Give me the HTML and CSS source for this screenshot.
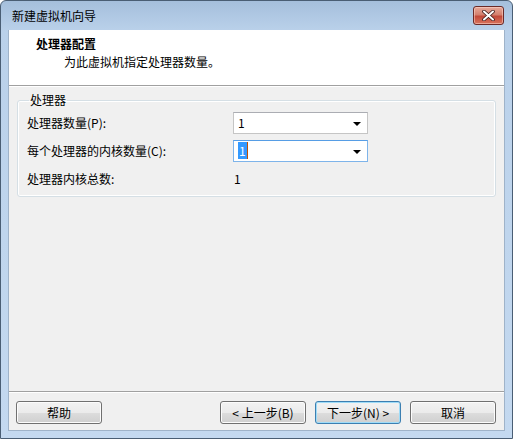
FILE: index.html
```html
<!DOCTYPE html>
<html lang="zh-CN">
<head>
<meta charset="UTF-8">
<title>新建虚拟机向导</title>
<link rel="stylesheet" href="styles.css">
</head>
<body>

<div class="window">
  <!-- Title bar -->
  <div class="titlebar">
    <span class="title">新建虚拟机向导</span>
    <button class="close-btn" title="关闭">
      <svg width="13" height="11" viewBox="0 0 13 11">
        <path d="M2 1.5 L11 9.5 M11 1.5 L2 9.5" stroke="#3b1a1a" stroke-width="3.6" stroke-linecap="round"/>
        <path d="M2 1.5 L11 9.5 M11 1.5 L2 9.5" stroke="#fff" stroke-width="2" stroke-linecap="round"/>
      </svg>
    </button>
  </div>

  <div class="client">
    <!-- Wizard header -->
    <div class="wizard-header">
      <div class="header-title">处理器配置</div>
      <div class="header-sub">为此虚拟机指定处理器数量。</div>
    </div>

    <!-- Page body -->
    <div class="wizard-body">
      <fieldset class="group">
        <legend>处理器</legend>
        <div class="form-grid">
          <label>处理器数量(P):</label>
          <div class="combo">
            <span class="combo-value">1</span>
            <span class="combo-arrow"></span>
          </div>

          <label>每个处理器的内核数量(C):</label>
          <div class="combo focused">
            <span class="combo-value"><span class="sel">1</span></span>
            <span class="combo-arrow"></span>
          </div>

          <label>处理器内核总数:</label>
          <span class="total">1</span>
        </div>
      </fieldset>
    </div>

    <!-- Buttons -->
    <div class="wizard-footer">
      <button class="btn">帮助</button>
      <div class="nav-buttons">
        <button class="btn">&lt; 上一步(B)</button>
        <button class="btn default">下一步(N) &gt;</button>
        <button class="btn">取消</button>
      </div>
    </div>
  </div>
</div>

</body>
</html>
```

FILE: styles.css
```css
body {
  margin: 0;
  padding: 0;
  background: #fff;
  font-family: "Noto Sans CJK SC", "Noto Sans", sans-serif;
  font-size: 12px;
  color: #000;
}

/* Window frame */
.window {
  width: 513px;
  height: 439px;
  box-sizing: border-box;
  border: 1px solid #4a5e74;
  border-radius: 6px 6px 0 0;
  background: linear-gradient(to bottom, #a5bfdc 0px, #bad1ea 30px, #c4d9f0 100%);
  padding: 0 7px 7px 7px;
  display: flex;
  flex-direction: column;
}

.titlebar {
  height: 29px;
  display: flex;
  align-items: center;
  justify-content: space-between;
  padding-left: 4px;
}

.title {
  color: #000;
  line-height: 14px;
  margin-top: 1px;
}

.close-btn {
  width: 31px;
  height: 19px;
  margin-right: 1px;
  padding: 0;
  border: 1px solid #6b2a27;
  border-radius: 3px;
  background: linear-gradient(to bottom, #e7a99a 0%, #d4806e 45%, #c2493a 55%, #d8745d 100%);
  box-shadow: inset 0 0 0 1px rgba(255, 220, 210, 0.5);
  display: flex;
  align-items: center;
  justify-content: center;
}

/* Client area */
.client {
  flex: 1;
  background: #f0f0f0;
  display: flex;
  flex-direction: column;
  border: 1px solid #9fb3c9;
  border-top: none;
}

.wizard-header {
  height: 56px;
  background: #fff;
  border-bottom: 1px solid #a0a0a0;
  box-shadow: 0 1px 0 #fff;
  box-sizing: border-box;
  padding-top: 6px;
}

.header-title {
  font-weight: bold;
  padding-left: 27px;
  line-height: 16px;
}

.header-sub {
  padding-left: 55px;
  line-height: 16px;
  margin-top: 2px;
}

.wizard-body {
  flex: 1;
  padding: 0 8px;
}

/* Group box */
.group {
  margin: 7px 0 0 0;
  padding: 5px 9px 6px 9px;
  border: 1px solid #d5dfe5;
  border-radius: 3px;
  box-shadow: inset 0 0 0 1px #fff;
}

.group legend {
  padding: 0 1px;
  margin-left: 2px;
  line-height: 14px;
}

.form-grid {
  display: grid;
  grid-template-columns: 206px 135px;
  grid-auto-rows: 22px;
  row-gap: 6px;
  align-items: center;
}

.form-grid label {
  line-height: 14px;
}

.combo {
  height: 22px;
  box-sizing: border-box;
  border: 1px solid #c5c5c5;
  border-top-color: #abadb3;
  background: #fff;
  display: flex;
  align-items: center;
  justify-content: space-between;
  padding: 0 6px 0 4px;
}

.combo.focused {
  border-color: #7eb4ea;
  border-top-color: #569de5;
}

.combo-value {
  line-height: 14px;
}

.combo-value .sel {
  background: #3399ff;
  color: #fff;
  padding: 0 1px;
  border-right: 1px solid #c05000;
}

.combo-arrow {
  width: 0;
  height: 0;
  border-left: 4px solid transparent;
  border-right: 4px solid transparent;
  border-top: 4px solid #000;
  margin-top: 1px;
}

.total {
  padding-left: 1px;
  line-height: 14px;
}

/* Footer buttons */
.wizard-footer {
  border-top: 1px solid #a0a0a0;
  box-shadow: inset 0 1px 0 #fff;
  padding: 9px 8px 6px 7px;
  display: flex;
  justify-content: space-between;
}

.nav-buttons {
  display: flex;
  gap: 9px;
}

.btn {
  width: 86px;
  height: 23px;
  padding: 0;
  font-family: "Noto Sans CJK SC", "Noto Sans", sans-serif;
  font-size: 12px;
  color: #000;
  border: 1px solid #707070;
  border-radius: 3px;
  background: linear-gradient(to bottom, #f2f2f2 0%, #ebebeb 50%, #dddddd 51%, #cfcfcf 100%);
  box-shadow: inset 0 0 0 1px #fcfcfc;
}

.btn.default {
  border-color: #3c7fb1;
  box-shadow: inset 0 0 0 1px #9fdcf8;
}
```
